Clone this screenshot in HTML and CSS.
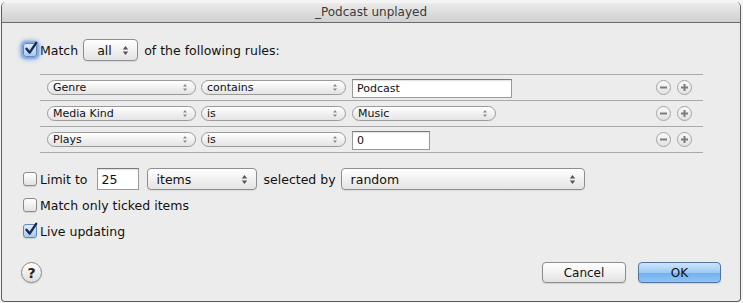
FILE: index.html
```html
<!DOCTYPE html>
<html>
<head>
<meta charset="utf-8">
<link rel="stylesheet" href="styles.css">
</head>
<body>
<div class="win">
  <div class="titlebar">_Podcast unplayed</div>
  <div class="content">
    <div class="match-row">
      <span class="cb checked focus"><svg class="tick" width="16" height="16" viewBox="0 0 16 16"><path d="M3.5 7.8 L6.6 11.6 L13.2 1.8" fill="none" stroke="#1b2a52" stroke-width="2.4" stroke-linecap="round" stroke-linejoin="round"/></svg></span>
      <span class="lbl">Match</span>
      <span class="popup reg all"><span>all</span><svg width="7" height="11" viewBox="0 0 7 11"><path d="M3.5 1 L6.2 4.4 H0.8Z M3.5 10 L6.2 6.6 H0.8Z" fill="#555"/></svg></span>
      <span class="lbl of">of the following rules:</span>
    </div>

    <div class="rules">
      <div class="rule">
        <span class="popup sm w1"><span>Genre</span><svg width="6" height="9" viewBox="0 0 6 9"><path d="M3 1 L5 3.6 H1Z M3 8 L5 5.4 H1Z" fill="#8a8a8a"/></svg></span>
        <span class="popup sm w2"><span>contains</span><svg width="6" height="9" viewBox="0 0 6 9"><path d="M3 1 L5 3.6 H1Z M3 8 L5 5.4 H1Z" fill="#8a8a8a"/></svg></span>
        <span class="field sm fw1">Podcast</span>
        <span class="pm">
          <span class="circ"><svg width="15" height="15" viewBox="0 0 15 15"><path d="M4 7.5 H11" stroke="#7c7c7c" stroke-width="2"/></svg></span>
          <span class="circ"><svg width="15" height="15" viewBox="0 0 15 15"><path d="M4 7.5 H11 M7.5 4 V11" stroke="#7c7c7c" stroke-width="2"/></svg></span>
        </span>
      </div>
      <div class="rule">
        <span class="popup sm w1"><span>Media Kind</span><svg width="6" height="9" viewBox="0 0 6 9"><path d="M3 1 L5 3.6 H1Z M3 8 L5 5.4 H1Z" fill="#8a8a8a"/></svg></span>
        <span class="popup sm w2"><span>is</span><svg width="6" height="9" viewBox="0 0 6 9"><path d="M3 1 L5 3.6 H1Z M3 8 L5 5.4 H1Z" fill="#8a8a8a"/></svg></span>
        <span class="popup sm w3"><span>Music</span><svg width="6" height="9" viewBox="0 0 6 9"><path d="M3 1 L5 3.6 H1Z M3 8 L5 5.4 H1Z" fill="#8a8a8a"/></svg></span>
        <span class="pm">
          <span class="circ"><svg width="15" height="15" viewBox="0 0 15 15"><path d="M4 7.5 H11" stroke="#7c7c7c" stroke-width="2"/></svg></span>
          <span class="circ"><svg width="15" height="15" viewBox="0 0 15 15"><path d="M4 7.5 H11 M7.5 4 V11" stroke="#7c7c7c" stroke-width="2"/></svg></span>
        </span>
      </div>
      <div class="rule">
        <span class="popup sm w1"><span>Plays</span><svg width="6" height="9" viewBox="0 0 6 9"><path d="M3 1 L5 3.6 H1Z M3 8 L5 5.4 H1Z" fill="#8a8a8a"/></svg></span>
        <span class="popup sm w2"><span>is</span><svg width="6" height="9" viewBox="0 0 6 9"><path d="M3 1 L5 3.6 H1Z M3 8 L5 5.4 H1Z" fill="#8a8a8a"/></svg></span>
        <span class="field sm fw2">0</span>
        <span class="pm">
          <span class="circ"><svg width="15" height="15" viewBox="0 0 15 15"><path d="M4 7.5 H11" stroke="#7c7c7c" stroke-width="2"/></svg></span>
          <span class="circ"><svg width="15" height="15" viewBox="0 0 15 15"><path d="M4 7.5 H11 M7.5 4 V11" stroke="#7c7c7c" stroke-width="2"/></svg></span>
        </span>
      </div>
    </div>

    <div class="opts">
      <div class="opt">
        <span class="cb"></span>
        <span class="lbl">Limit to</span>
        <span class="field reg f25">25</span>
        <span class="popup reg items"><span>items</span><svg width="7" height="11" viewBox="0 0 7 11"><path d="M3.5 1 L6.2 4.4 H0.8Z M3.5 10 L6.2 6.6 H0.8Z" fill="#555"/></svg></span>
        <span class="lbl sel">selected by</span>
        <span class="popup reg random"><span>random</span><svg width="7" height="11" viewBox="0 0 7 11"><path d="M3.5 1 L6.2 4.4 H0.8Z M3.5 10 L6.2 6.6 H0.8Z" fill="#555"/></svg></span>
      </div>
      <div class="opt">
        <span class="cb"></span>
        <span class="lbl">Match only ticked items</span>
      </div>
      <div class="opt">
        <span class="cb checked"><svg class="tick" width="16" height="16" viewBox="0 0 16 16"><path d="M3.5 7.8 L6.6 11.6 L13.2 1.8" fill="none" stroke="#1b2a52" stroke-width="2.4" stroke-linecap="round" stroke-linejoin="round"/></svg></span>
        <span class="lbl">Live updating</span>
      </div>
    </div>

    <div class="footer">
      <span class="help">?</span>
      <span class="spacer"></span>
      <span class="btn cancel">Cancel</span>
      <span class="btn ok">OK</span>
    </div>
  </div>
</div>
</body>
</html>
```
FILE: styles.css
```css
* { box-sizing: border-box; }
html, body { margin: 0; padding: 0; }
body {
  width: 743px;
  height: 303px;
  overflow: hidden;
  background: #f4f4f4;
  font-family: "DejaVu Sans", "Noto Sans", sans-serif;
  font-size: 12px;
  color: #111;
}
.win {
  margin: 2px 0 0 1px;
  width: 740px;
  height: 300px;
  background: #ececec;
  border: 1px solid #5e5e5e;
  border-top: none;
  border-radius: 5px 5px 4px 4px;
  overflow: hidden;
}
.titlebar {
  height: 21px;
  border-bottom: 1px solid #6a6a6a;
  background: linear-gradient(#ebebeb, #d0d0d0);
  border-top: 1px solid #f6f6f6;
  text-align: center;
  font-size: 12px;
  line-height: 19px;
  color: #3a3a3a;
  border-radius: 5px 5px 0 0;
}
.content {
  padding-left: 21px;
}
.match-row {
  margin-top: 16px;
  height: 22px;
  display: flex;
  align-items: center;
}
.lbl { white-space: nowrap; color: #111; font-size: 12.5px; }
.cb {
  position: relative;
  width: 14px;
  height: 14px;
  flex: none;
  border: 1px solid #8b8b8b;
  border-radius: 3px;
  background: linear-gradient(#ffffff, #e3e3e3);
  margin-right: 3px;
  box-shadow: 0 1px 1px rgba(0,0,0,0.12);
}
.cb.checked {
  background: linear-gradient(#e1eefc, #a6cbf0);
  border-color: #6686b3;
}
.cb.focus {
  box-shadow: 0 0 2px 2px #7fa9e3, 0 0 4px 3px rgba(120,165,230,0.6);
}
.tick {
  position: absolute;
  left: -1px;
  top: -3px;
}
.popup {
  display: flex;
  align-items: center;
  justify-content: space-between;
  flex: none;
  border: 1px solid #8e8e8e;
  background: linear-gradient(#ffffff, #f1f1f1 50%, #e4e4e4);
  color: #111;
  white-space: nowrap;
}
.popup.reg {
  height: 22px;
  border-radius: 4px;
  padding: 0 8px 0 14px;
  font-size: 12.5px;
  box-shadow: 0 1px 1px rgba(0,0,0,0.08);
}
.popup.all { width: 55px; margin: 0 6px 0 5px; padding-left: 13px; }
.popup.items { width: 110px; margin-left: 8px; padding-left: 9px; }
.popup.random { width: 244px; margin-left: 5px; padding-left: 9px; }
.popup.sm {
  height: 15px;
  border-radius: 8px;
  padding: 0 7px 0 5px;
  font-size: 11px;
  border-color: #9a9a9a;
}
.w1 { width: 149px; margin-right: 5px; }
.w2 { width: 145px; margin-right: 6px; }
.w3 { width: 144px; }
.field {
  flex: none;
  background: #fff;
  border: 1px solid #9a9a9a;
  border-top-color: #7a7a7a;
  box-shadow: inset 0 1px 1px rgba(0,0,0,0.12);
  display: flex;
  align-items: center;
  color: #111;
}
.field.sm {
  height: 19px;
  font-size: 11px;
  padding-left: 4px;
  margin-top: 1px;
}
.fw1 { width: 160px; }
.fw2 { width: 78px; }
.field.reg {
  height: 22px;
  font-size: 12.5px;
  padding-left: 4px;
}
.f25 { width: 42px; margin-left: 9px; }
.sel { margin-left: 7px; }
.rules {
  margin: 13px 0 0 17px;
  width: 663px;
  border-top: 1px solid #a9a9a9;
}
.rule {
  height: 26px;
  border-bottom: 1px solid #a9a9a9;
  display: flex;
  align-items: center;
  padding: 0 11px 0 7px;
}
.pm {
  margin-left: auto;
  display: flex;
  gap: 6px;
}
.circ {
  width: 15px;
  height: 15px;
  border-radius: 50%;
  border: 1px solid #a4a4a4;
  background: linear-gradient(#fafafa, #e2e2e2);
  display: flex;
  align-items: center;
  justify-content: center;
  position: relative;
}
.circ svg { position: absolute; left: -1px; top: -1px; }
.opts {
  margin-top: 15px;
  display: flex;
  flex-direction: column;
  gap: 4px;
}
.opt {
  height: 22px;
  display: flex;
  align-items: center;
}
.footer {
  margin-top: 20px;
  height: 21px;
  display: flex;
  align-items: center;
  padding-right: 19px;
}
.help {
  margin-left: -2px;
  width: 21px;
  height: 21px;
  border-radius: 50%;
  border: 1px solid #8a8a8a;
  background: linear-gradient(#ffffff, #dedede);
  box-shadow: 0 1px 1px rgba(0,0,0,0.15);
  display: flex;
  align-items: center;
  justify-content: center;
  font-weight: bold;
  font-size: 14px;
  color: #222;
}
.spacer { flex: 1; }
.btn {
  height: 21px;
  border-radius: 4px;
  display: flex;
  align-items: center;
  justify-content: center;
  font-size: 12px;
  color: #111;
  box-shadow: 0 1px 1px rgba(0,0,0,0.12);
}
.cancel {
  width: 84px;
  border: 1px solid #8e8e8e;
  background: linear-gradient(#ffffff, #f2f2f2 50%, #e2e2e2);
}
.ok {
  width: 83px;
  margin-left: 12px;
  border: 1px solid #55739f;
  background: linear-gradient(#cfe4fb, #9ccaf4 50%, #6eb0ee 51%, #8fc4f5);
}
```
